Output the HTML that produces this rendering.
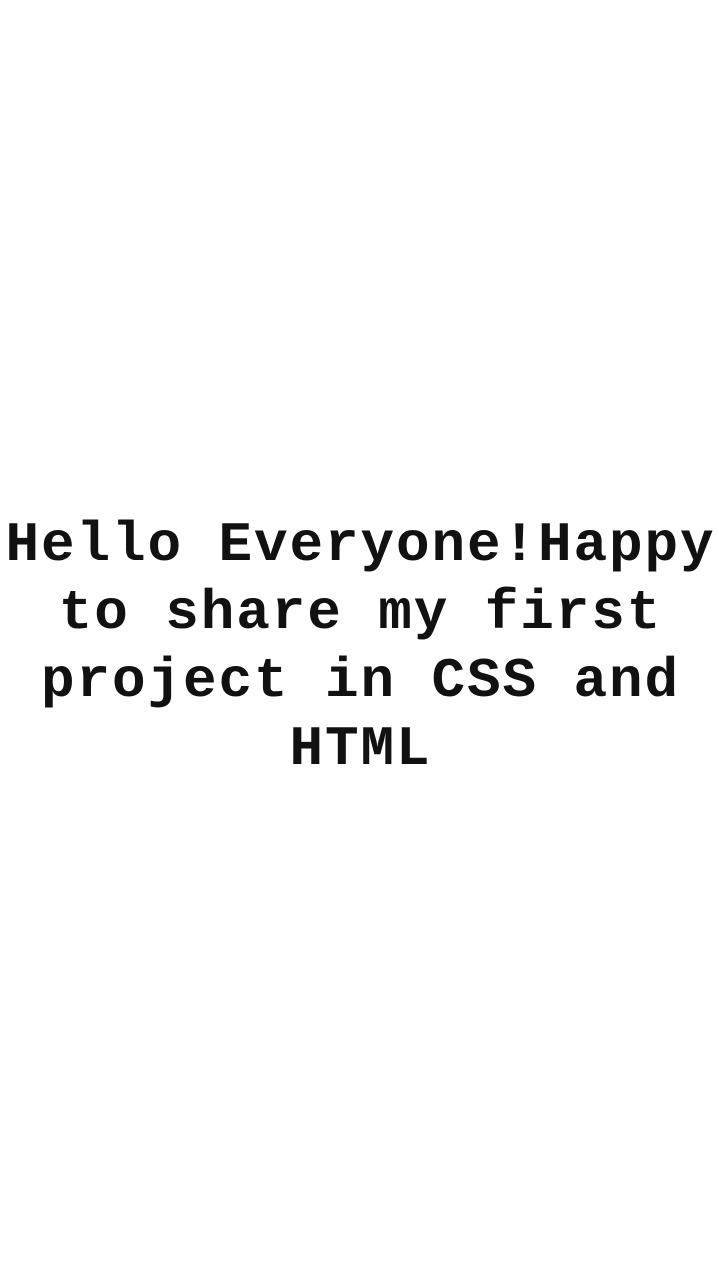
<!DOCTYPE html>
<html><head><style>
html,body{margin:0;padding:0;background:#fff;width:719px;height:1280px;overflow:hidden}
.l{position:absolute;left:1px;width:719px;text-align:center;font-family:"Liberation Mono","Courier New",monospace;font-weight:bold;font-size:56px;letter-spacing:1.9px;line-height:68px;color:#111;white-space:pre}
</style></head><body>
<div class="l" style="top:511px">Hello Everyone!Happy</div>
<div class="l" style="top:579px">to share my first</div>
<div class="l" style="top:647px">project in CSS and</div>
<div class="l" style="top:715px">HTML</div>
</body></html>
